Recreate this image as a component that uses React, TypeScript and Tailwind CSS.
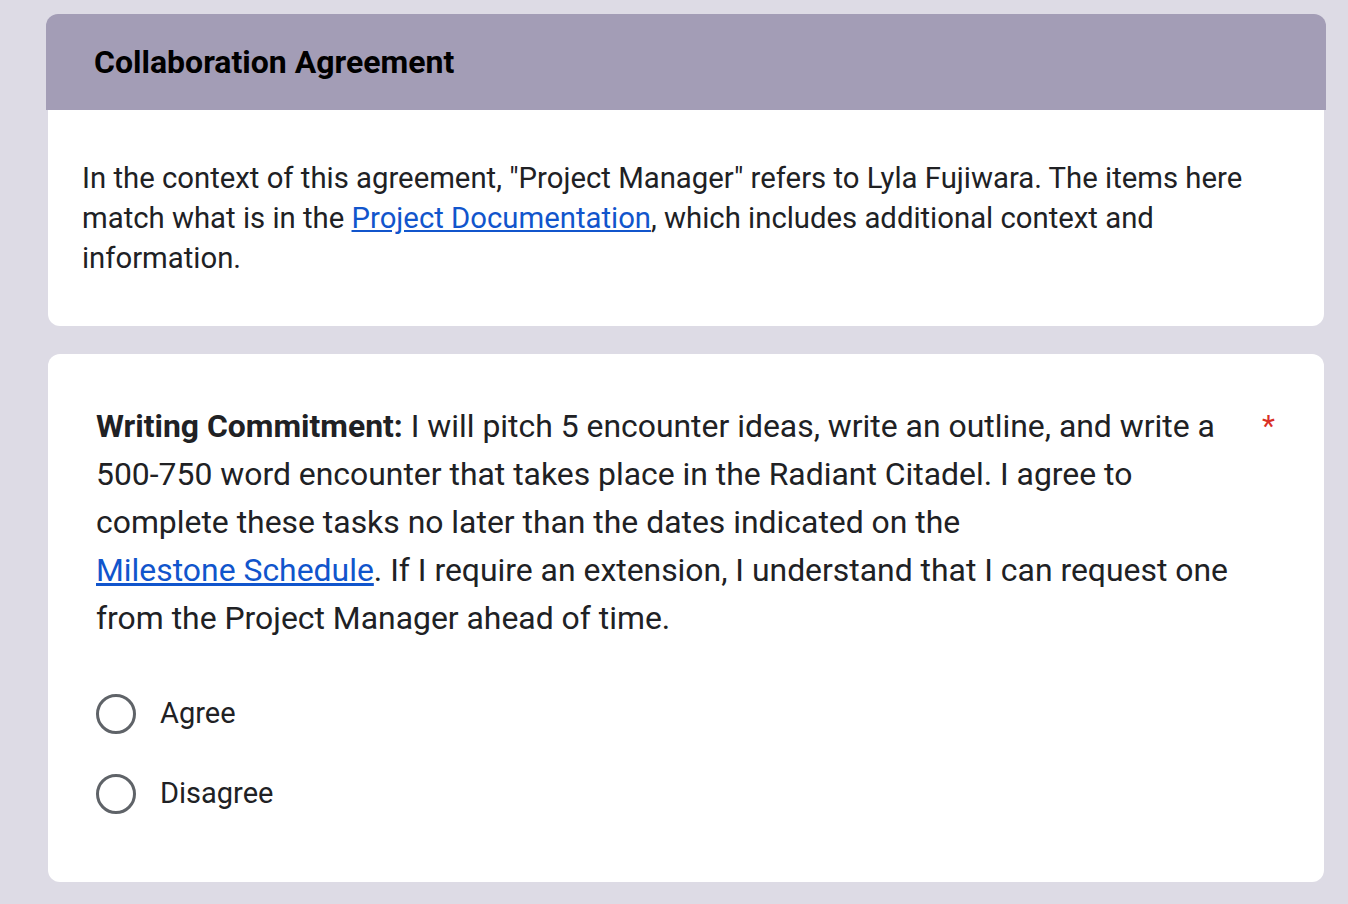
import React from 'react';

const options = ['Agree', 'Disagree'];

const App: React.FC = () => {
  return (
    <div
      className="min-h-screen bg-[#dddbe5] pt-[14px] text-[#202124]"
      style={{ fontFamily: 'Roboto, "Liberation Sans", sans-serif' }}
    >
      <div className="ml-[46px] w-[1280px]">
        {/* Title card */}
        <div className="h-[96px] rounded-t-[12px] bg-[#a39db6] flex items-center pl-[48px]">
          <h1 className="text-[32px] font-bold text-black">Collaboration Agreement</h1>
        </div>
        <div className="mx-[2px] bg-white rounded-b-[12px] px-[34px] py-[48px]">
          <p className="text-[29.3px] leading-[40px]">
            In the context of this agreement, "Project Manager" refers to Lyla Fujiwara. The items here match
            what is in the{' '}
            <a href="#" className="text-[#1155cc] underline">
              Project Documentation
            </a>
            , which includes additional context and information.
          </p>
        </div>

        {/* Question card */}
        <div className="mx-[2px] mt-[28px] bg-white rounded-[12px] pl-[48px] pr-[48px] pt-[48px] pb-[68px]">
          <div className="flex">
            <p className="w-[1146px] text-[31.9px] leading-[48px]">
              <span className="font-bold">Writing Commitment:</span> I will pitch 5 encounter ideas, write an
              outline, and write a 500-750 word encounter that takes place in the Radiant Citadel. I agree to
              complete these tasks no later than the dates indicated on the{' '}
              <a href="#" className="text-[#1155cc] underline whitespace-nowrap">
                Milestone Schedule
              </a>
              . If I require an extension, I understand that I can request one from the Project Manager ahead
              of time.
            </p>
            <span className="ml-auto text-[30px] leading-[48px] text-[#d93025] w-[14px]">*</span>
          </div>

          <div className="mt-[52px] flex flex-col gap-[40px]">
            {options.map((opt) => (
              <label key={opt} className="flex items-center h-[40px] cursor-pointer">
                <span className="w-[40px] h-[40px] rounded-full border-[3px] border-[#5f6368] shrink-0" />
                <span className="ml-[24px] text-[29px]">{opt}</span>
              </label>
            ))}
          </div>
        </div>
      </div>
    </div>
  );
};

export default App;
